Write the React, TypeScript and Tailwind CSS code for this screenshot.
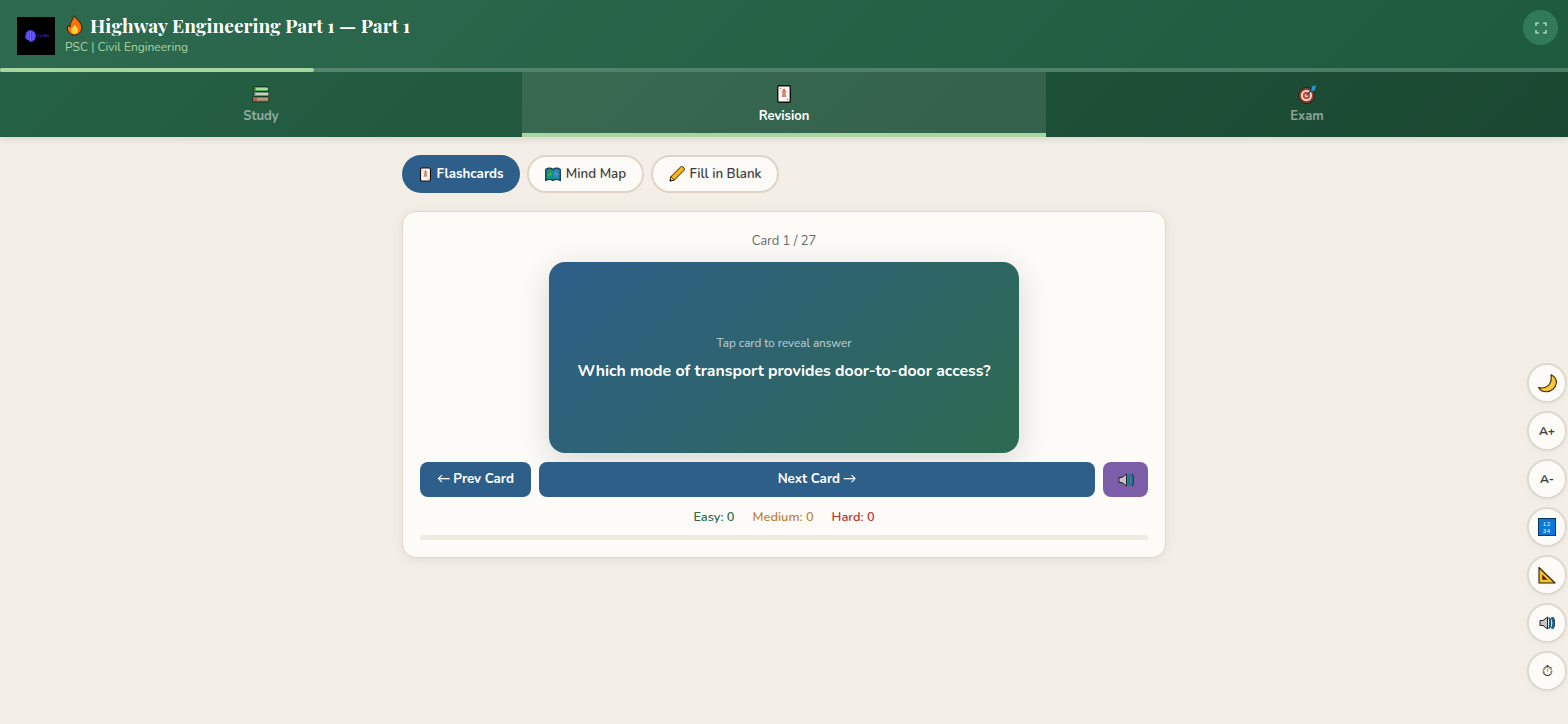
import React from "react";

const sans = "font-['Nunito','Lato','Noto_Sans',sans-serif]";

const Fire = () => (
  <svg width="19" height="21" viewBox="0 0 18 21" className="shrink-0">
    <path d="M9 .8c1 3 5 5 6.600 8.600 1.400 3.400.6 6.600-1.600 8.600-1.400 1.400-3.200 2-5 2s-4-.7-5.300-2.200C1.600 15.600 1.200 12.600 2.600 10c.6 1 1.200 1.600 2 2C4.400 8 6.600 5 9 .8z" fill="#f7720f" stroke="#3a1a05" strokeWidth="1" />
    <path d="M9.200 9.500c.8 1.600 3.300 3 3.300 5.800 0 2.100-1.500 3.700-3.500 3.700s-3.500-1.600-3.500-3.500c0-2.300 2.700-3.500 3.700-6z" fill="#ffd23c" />
  </svg>
);
const Books = () => (
  <svg width="18" height="17" viewBox="0 0 18 17">
    <rect x="2" y=".5" width="14" height="5" rx="1" fill="#4fae4f" stroke="#173a25" />
    <rect x="4" y="2" width="12" height="2" fill="#a8d8a0" />
    <rect x="1.500" y="5.500" width="15" height="5" rx="1" fill="#6f8a80" stroke="#173a25" />
    <rect x="3.500" y="7" width="13" height="2" fill="#c8cfc0" />
    <rect x=".5" y="10.500" width="16.500" height="5.500" rx="1" fill="#a5623f" stroke="#173a25" />
    <rect x="5" y="12" width="11" height="2.500" fill="#a89a88" />
  </svg>
);
const Card = ({ w = 14, h = 18 }: { w?: number; h?: number }) => (
  <svg width={w} height={h} viewBox="0 0 14 18" className="shrink-0">
    <rect x=".7" y=".7" width="12.600" height="16.600" rx="1.500" fill="#fdf8f6" stroke="#111" strokeWidth="1.400" />
    <path d="M4 6h6l-1.500 2 1 4H4.500l1-4z" fill="#c98f70" />
    <circle cx="7" cy="5" r="1.300" fill="#d85a4a" />
    <circle cx="3.500" cy="3.500" r=".7" fill="#d85a4a" />
    <circle cx="10.500" cy="14.500" r=".7" fill="#d85a4a" />
  </svg>
);
const Target = () => (
  <svg width="19" height="19" viewBox="0 0 19 19">
    <circle cx="8.500" cy="10.500" r="8" fill="#8a4030" stroke="#2a1a14" />
    <circle cx="8.500" cy="10.500" r="5.500" fill="#efe6d8" />
    <circle cx="8.500" cy="10.500" r="3.800" fill="#d0492f" />
    <circle cx="8.500" cy="10.500" r="1.600" fill="#efe6d8" />
    <path d="M8.500 10.500 15 3.500" stroke="#1c4f70" strokeWidth="1.300" />
    <path d="M13.500 4.500l.8-3.500 3.700-.5-.8 3.300-.4 1.700-2.800.5z" fill="#1f9bd6" />
  </svg>
);
const MapBook = () => (
  <svg width="16" height="15" viewBox="0 0 16 15" className="shrink-0">
    <path d="M.7 2.500C3 1 6 1 8 2.500c2-1.500 5-1.500 7.300 0V13.500c-2.300-1.200-5.300-1.200-7.300 0-2-1.200-5-1.200-7.300 0z" fill="#0f8f85" stroke="#12324a" strokeWidth="1.200" />
    <path d="M2.300 3.500c2-.6 3.700-.3 5 .6v7c-1.500-.7-3.200-.8-5-.4z" fill="#1c9a6a" />
    <path d="M8.700 4.100c1.300-.9 3-1.200 5-.6v7.200c-1.800-.4-3.500-.3-5 .4z" fill="#2e86d0" />
    <path d="M3 8.500c1.500-1.500 2-2 3.500-1M10 6c1.500 1 2 2 3 1" stroke="#c9b04a" strokeWidth=".8" fill="none" />
  </svg>
);
const Pencil = () => (
  <svg width="16" height="16" viewBox="0 0 16 16" className="shrink-0">
    <path d="M1 15l.9-4.300L11.600 1c.8-.8 1.600-.7 2.300 0l1 1c.7.800.8 1.600 0 2.400L5.300 14.100z" fill="#f5b51e" stroke="#2a1c05" strokeWidth="1" />
    <path d="M1 15l.9-4.300 3.400 3.400z" fill="#f0d8a8" stroke="#2a1c05" strokeWidth=".8" />
    <path d="M1 15l.4-1.900 1.500 1.500z" fill="#111" />
  </svg>
);
const Moon = () => (
  <svg width="19" height="19" viewBox="0 0 19 19">
    <path d="M13 .8c3.800 1.700 5.600 4.700 5.300 8.200-.4 4.800-4.800 8.800-9.800 8.800-3.500 0-6.600-1.700-7.900-4.300 3.200.9 6.200.5 8.500-1.100 3-2.100 4.700-6.200 3.900-11.600z" fill="#f8c53a" stroke="#3a2a08" strokeWidth="1.100" strokeLinejoin="round" />
  </svg>
);
const Nums = () => (
  <svg width="18" height="18" viewBox="0 0 18 18">
    <rect x=".5" y=".5" width="17" height="17" fill="#0a78d6" stroke="#0b3560" />
    <text x="9" y="8" textAnchor="middle" fontSize="5.500" fill="#fff" fontFamily="Liberation Sans, sans-serif" letterSpacing="1">12</text>
    <text x="9" y="14.500" textAnchor="middle" fontSize="5.500" fill="#fff" fontFamily="Liberation Sans, sans-serif" letterSpacing="1">34</text>
  </svg>
);
const Ruler = () => (
  <svg width="18" height="18" viewBox="0 0 18 18">
    <path d="M1 1.500v15.500h16z" fill="#f2c230" stroke="#2a2008" strokeWidth="1.100" strokeLinejoin="round" />
    <path d="M4.300 8.500v5.300h5.300z" fill="#5a1f14" />
  </svg>
);
const Speaker = ({ s = 16, wave = "#12808f" }: { s?: number; wave?: string }) => (
  <svg width={s} height={s} viewBox="0 0 16 16">
    <path d="M1 5.500h3L8.500 2v12L4 10.500H1z" fill="#c4c4c4" stroke="#22222a" strokeWidth="1" strokeLinejoin="round" />
    <path d="M9.500 3c2.200 0 2.200 10 0 10M12.500 2.500c2.600 3 2.600 8 0 11" fill="none" stroke={wave} strokeWidth="2.200" />
    <path d="M14 2c2.300 3.800 2.300 8.200 0 12" fill="none" stroke="#1c2a3a" strokeWidth="1" />
  </svg>
);

function Tab({ icon, label, active, cls }: { icon: React.ReactNode; label: string; active?: boolean; cls: string }) {
  return (
    <div className={`flex flex-col items-center pt-[12px] h-[65px] border-b-[4px] ${cls} ${active ? "border-[#a8d5a2] bg-white/10" : "border-transparent"}`}>
      <span className="h-[20px] flex items-center">{icon}</span>
      <span className={`text-[13px] leading-[18px] font-bold mt-[3px] ${active ? "text-white" : "text-white/50"}`}>{label}</span>
    </div>
  );
}

function Side({ children, cls = "" }: { children: React.ReactNode; cls?: string }) {
  return (
    <div className={`w-10 h-10 rounded-full bg-[#fdfbf7] border-2 border-[#e0d8cc] shadow-[0_2px_6px_rgba(0,0,0,0.04)] flex items-center justify-center text-[#3d3d3d] ${cls}`}>
      {children}
    </div>
  );
}

const Arrow = ({ c }: { c: string }) => <span className="font-normal">{c}</span>;

export default function App() {
  return (
    <div className={`relative min-h-[724px] bg-[#f3efe7] ${sans} overflow-hidden`}>
      <header className="relative shadow-[0_2px_8px_rgba(0,0,0,0.12)]">
        <div className="bg-[linear-gradient(135deg,#2d6a4f,#1e5a3e)]">
          <div className="h-[68px] flex items-start pl-[17px] pr-[10px]">
            <div className="mt-[17px] w-[38px] h-[38px] bg-black shrink-0 flex items-center pl-[8px] gap-[1px]">
              <svg width="11" height="12" viewBox="0 0 11 12" className="shrink-0">
                <path d="M5 0c3 0 6 2 6 6s-3 6-6 6C4 10 2 10 0 8 0 4 2 0 5 0z" fill="#4a3cf0" />
                <path d="M3 2v8M5.500 1v10M8 2v8" stroke="#8f88ff" strokeWidth=".7" />
              </svg>
              <span className="text-[4px] leading-none text-[#4a3cf0] whitespace-nowrap">CivilEn</span>
            </div>
            <div className="ml-[10px] mt-[12px]">
              <div className="font-['Playfair_Display','Liberation_Serif',serif] font-bold text-[19.2px] leading-[26px] text-white flex items-center gap-[6px] whitespace-nowrap"><Fire /><span>Highway Engineering Part 1 — Part 1</span></div>
              <div className="text-[12px] leading-[17px] mt-[1px] text-[#a8d5a2]">PSC | Civil Engineering</div>
            </div>
            <div className="ml-auto mt-[10px] w-[35px] h-[35px] rounded-full bg-[#317a58] flex items-center justify-center">
              <svg width="12" height="12" viewBox="0 0 12 12" fill="none" stroke="#d8f0d8" strokeWidth="1.200"><path d="M1 4V1h3M8 1h3v3M11 8v3H8M4 11H1V8" /></svg>
            </div>
          </div>
          <div className="h-[4px] bg-white/20"><div className="h-full w-[20%] bg-[#a8d5a2] rounded-full" /></div>
        </div>
        <nav className="flex bg-[linear-gradient(135deg,#256145,#1a4731)]">
          <Tab cls="w-[522px]" icon={<Books />} label="Study" />
          <Tab cls="w-[524px]" icon={<Card />} label="Revision" active />
          <Tab cls="flex-1" icon={<Target />} label="Exam" />
        </nav>
      </header>

      <main className="w-[764px] mx-auto pt-[18px]">
        <div className="flex gap-[7px] h-[38px]">
          <div className="w-[118px] pl-[2px] rounded-full bg-[#2d5f8a] text-white font-bold text-[13.33px] flex items-center justify-center gap-[5px]"><Card w={11} h={15} /><span className="pt-[1px]">Flashcards</span></div>
          <div className="w-[117px] rounded-full bg-[#fdfbf7] border-2 border-[#e0d5c5] text-[#3d3d3d] font-semibold text-[13.33px] flex items-center justify-center gap-[5px]"><MapBook /><span className="pt-[1px]">Mind Map</span></div>
          <div className="w-[128px] rounded-full bg-[#fdfbf7] border-2 border-[#e0d5c5] text-[#3d3d3d] font-semibold text-[13.33px] flex items-center justify-center gap-[5px]"><Pencil /><span className="pt-[1px]">Fill in Blank</span></div>
        </div>

        <section className="mt-[18px] h-[347px] rounded-[14px] bg-[#fdfbf7] border border-[#e6d5c3] shadow-[0_2px_12px_rgba(0,0,0,0.07)] px-[17px] pt-[20px]">
          <div className="text-center text-[13px] leading-[18px] text-[#6b6b6b]">Card 1 / 27</div>
          <div className="mt-[12px] mx-auto w-[470px] h-[191px] rounded-[16px] bg-[linear-gradient(135deg,#2d5f8a,#2d6a4f)] shadow-[0_8px_32px_rgba(0,0,0,0.15)] flex flex-col items-center justify-center text-white">
            <div className="text-[11.7px] leading-[17px] opacity-70 mt-[2px]">Tap card to reveal answer</div>
            <div className="mt-[7px] text-[15.84px] leading-[24px] font-bold">Which mode of transport provides door-to-door access?</div>
          </div>
          <div className="mt-[9px] flex gap-2 h-[35px]">
            <div className="w-[111px] rounded-[8px] bg-[#2d5f8a] text-white font-bold text-[13.33px] flex items-center justify-center gap-[3px]"><Arrow c="←" /><span>Prev Card</span></div>
            <div className="flex-1 rounded-[8px] bg-[#2d5f8a] text-white font-bold text-[13.33px] flex items-center justify-center gap-[3px]"><span>Next Card</span><Arrow c="→" /></div>
            <div className="w-[45px] rounded-[8px] bg-[#7b5ea7] flex items-center justify-center"><Speaker /></div>
          </div>
          <div className="mt-[11px] flex justify-center gap-[18px] text-[12.8px] leading-[18px] font-semibold">
            <span className="text-[#2d6a4f]">Easy: 0</span>
            <span className="text-[#c17f3a]">Medium: 0</span>
            <span className="text-[#b83232]">Hard: 0</span>
          </div>
          <div className="mt-[9px] h-[5px] rounded-full bg-[#f0ebe0]" />
        </section>
      </main>

      <aside className="absolute right-[1px] top-[363px] flex flex-col gap-2">
        <Side><Moon /></Side>
        <Side cls="text-[12px] font-bold">A+</Side>
        <Side cls="text-[12px] font-bold">A-</Side>
        <Side><Nums /></Side>
        <Side><Ruler /></Side>
        <Side><Speaker wave="#14608f" /></Side>
        <Side cls="text-[14px]">⏱</Side>
      </aside>
    </div>
  );
}
